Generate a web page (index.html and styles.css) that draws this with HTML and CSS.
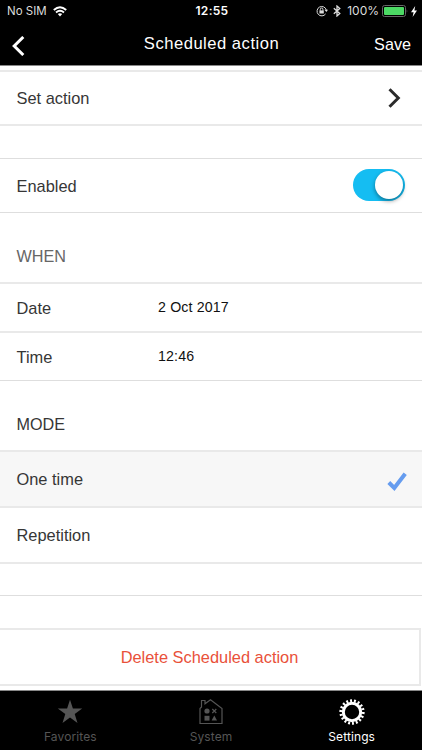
FILE: index.html
```html
<!DOCTYPE html>
<html lang="en">
<head>
    <meta charset="UTF-8">
    <meta name="viewport" content="width=device-width, initial-scale=1.0">
    <title>Scheduled action</title>
    <link rel="stylesheet" href="styles.css">
</head>
<body>

    <!-- Status bar and navigation -->
    <header class="header">
        <div class="status-bar">
            <div class="status-left">
                <span>No SIM</span>
                <svg class="wifi" width="14" height="11" viewBox="0 0 14 11" fill="none" stroke="#fff" stroke-width="1.9">
                    <path d="M0.8 4Q7 -1.6 13.2 4"/>
                    <path d="M3 6.5Q7 3 11 6.5"/>
                    <path d="M7 10.4L4.8 8.1Q7 6.4 9.2 8.1Z" fill="#fff" stroke="none"/>
                </svg>
            </div>
            <span class="clock">12:55</span>
            <div class="status-right">
                <svg width="12" height="12" viewBox="0 0 12 12" fill="none" stroke="#ddd">
                    <path d="M9.6 8.9A4.7 4.7 0 1 1 10.3 5"/>
                    <path d="M8.4 4.8H12L10.4 7Z" fill="#ddd" stroke="none"/>
                    <path d="M3.4 5.4H7.8V8.5H3.4Z" fill="#ddd" stroke="none"/>
                    <path d="M4.3 5.6V4.3A1.3 1.3 0 0 1 6.9 4.3V5.6"/>
                </svg>
                <svg class="bluetooth" width="8" height="12" viewBox="0 0 8 12" fill="none" stroke="#ddd" stroke-width="1.3">
                    <path d="M0.8 3.2L6.8 8.6L4 11V1L6.8 3.4L0.8 8.8"/>
                </svg>
                <span class="percent">100%</span>
                <svg class="battery" width="26" height="12" viewBox="0 0 26 12">
                    <rect x="0.5" y="0.5" width="23" height="11" rx="2" fill="none" stroke="#666"/>
                    <rect x="2" y="2" width="20" height="8" rx="1" fill="#4cd964"/>
                    <path d="M24.7 4.3Q26 6 24.7 7.7Z" fill="#666"/>
                </svg>
                <svg class="bolt" width="6" height="11" viewBox="0 0 6 11">
                    <path d="M4.2 0L0 6.2H2.6L1.6 11L6 4.6H3.4Z" fill="#fff"/>
                </svg>
            </div>
        </div>
        <nav class="nav">
            <svg class="back" width="13" height="20" viewBox="0 0 13 20" fill="none" stroke="#fff" stroke-width="3">
                <path d="M11.3 1L2.2 10L11.3 19"/>
            </svg>
            <h1>Scheduled action</h1>
            <span class="save">Save</span>
        </nav>
    </header>

    <main class="content">
        <div class="row row-action">
            <span>Set action</span>
            <svg class="chevron" width="13" height="20" viewBox="0 0 13 20" fill="none" stroke="#2b2b2b" stroke-width="3">
                <path d="M1.5 1.2L10.3 10L1.5 18.8"/>
            </svg>
        </div>

        <div class="row row-enabled">
            <span>Enabled</span>
            <div class="toggle"><div class="knob"></div></div>
        </div>

        <h2 class="when">WHEN</h2>
        <div class="row row-date">
            <span class="label">Date</span>
            <span class="value">2 Oct 2017</span>
        </div>
        <div class="row row-time">
            <span class="label">Time</span>
            <span class="value">12:46</span>
        </div>

        <h2 class="mode">MODE</h2>
        <div class="row row-mode selected">
            <span>One time</span>
            <svg class="check" width="20" height="20" viewBox="0 0 20 20" fill="none" stroke="#659cef" stroke-width="4">
                <path d="M1.8 10.5L7.3 16L18.2 1.8"/>
            </svg>
        </div>
        <div class="row row-mode">
            <span>Repetition</span>
        </div>
        <div class="spacer"></div>

        <button class="delete">Delete Scheduled action</button>
    </main>

    <!-- Bottom tabs -->
    <footer class="tabs">
        <div class="tab">
            <svg width="26" height="26" viewBox="0 0 26 26">
                <path d="M13 0.8L15.9 9.6H25.2L17.7 15L20.5 24L13 18.5L5.5 24L8.3 15L0.8 9.6H10.1Z" fill="#555"/>
            </svg>
            <span>Favorites</span>
        </div>
        <div class="tab">
            <svg width="26" height="26" viewBox="0 0 26 26" fill="none" stroke="#555" stroke-width="1.2">
                <path d="M2 24.5V9.5L3.5 8V1.5H7V4.8L12.5 0.8L24 9.5V24.5Z"/>
                <g fill="#555" stroke="none">
                    <circle cx="9" cy="12" r="2.6"/>
                    <path d="M6.5 16.8H11.5V21.6H6.5Z"/>
                    <path d="M16.3 16.6L19 21.6H13.6Z"/>
                </g>
                <path d="M14.3 10L18.3 14M18.3 10L14.3 14"/>
            </svg>
            <span>System</span>
        </div>
        <div class="tab active">
            <svg width="26" height="26" viewBox="0 0 26 26" fill="none" stroke="#fff">
                <circle cx="13" cy="13" r="8.7" stroke-width="3"/>
                <circle cx="13" cy="13" r="11.2" stroke-width="2.9" pathLength="180" stroke-dasharray="5 5"/>
            </svg>
            <span>Settings</span>
        </div>
    </footer>

</body>
</html>
```

FILE: styles.css
```css
* {
    box-sizing: border-box;
}
body {
    font-family: "Liberation Sans", Arial, sans-serif;
    font-size: 16.4px;
    line-height: 20px;
    margin: 0;
    height: 750px;
    display: flex;
    flex-direction: column;
    background-color: #fff;
    color: #363636;
    overflow: hidden;
}

.header {
    height: 66px;
    background-color: #000;
    color: #fff;
    border-bottom: 1px solid #888;
}
.status-bar {
    height: 22px;
    display: grid;
    grid-template-columns: 1fr auto 1fr;
    align-items: center;
    padding: 0 5px 0 7px;
    font-family: Inter, sans-serif;
    font-size: 11.5px;
    color: #ddd;
}
.status-left, .status-right {
    display: flex;
    align-items: center;
}
.status-right {
    justify-content: flex-end;
}
.wifi {
    margin-left: 6px;
}
.clock {
    font-weight: 600;
    font-size: 12px;
    letter-spacing: 0.3px;
    color: #fff;
}
.bluetooth {
    margin-left: 5px;
}
.percent {
    margin-left: 6px;
    font-size: 12px;
}
.battery {
    margin-left: 3px;
}
.bolt {
    margin-left: 3px;
}
.nav {
    height: 43px;
    display: grid;
    grid-template-columns: 1fr auto 1fr;
    align-items: center;
    padding: 0 11px 0 12px;
}
.back {
    margin-top: 5px;
}
.nav h1 {
    font-size: 16.6px;
    font-weight: normal;
    letter-spacing: 0.5px;
    margin: 0;
}
.save {
    text-align: right;
    font-size: 16.2px;
}

.content {
    flex: 1;
    padding-top: 4px;
}
.row {
    display: flex;
    align-items: center;
    justify-content: space-between;
    padding: 0 17px 0 16.5px;
    border: 0 solid #e9e9e9;
}
.row-action {
    height: 56px;
    border-width: 2px 0;
    margin-bottom: 32px;
}
.chevron {
    margin-right: 4px;
}
.row-enabled {
    height: 55px;
    border-width: 1px 0;
    border-color: #dedede;
}
.toggle {
    width: 52px;
    height: 32px;
    margin-bottom: 1px;
    padding: 2px;
    border-radius: 16px;
    background-color: #15bdf2;
    display: flex;
    justify-content: flex-end;
}
.knob {
    width: 28px;
    height: 28px;
    border-radius: 50%;
    background-color: #fff;
    box-shadow: 0 2px 4px rgba(0, 0, 0, 0.4);
}
.content h2 {
    height: 69px;
    margin: 0;
    padding: 33px 16.5px 0;
    font-size: 16.2px;
    font-weight: normal;
}
.when {
    color: #666;
}
.row-date, .row-time {
    justify-content: flex-start;
    border-top-width: 2px;
}
.row-date {
    height: 49px;
}
.row-time {
    height: 50px;
    border-bottom: 1px solid #dedede;
}
.label {
    width: 141.5px;
}
.value {
    padding-bottom: 2px;
    font-size: 14.2px;
    letter-spacing: 0.15px;
    color: #111;
}
.row-mode {
    height: 56px;
    border-top-width: 2px;
}
.selected {
    background-color: #f7f7f7;
}
.check {
    margin: 5px -2px 0 0;
}
.spacer {
    height: 34px;
    border-top: 2px solid #e9e9e9;
    border-bottom: 1px solid #dedede;
    margin-bottom: 32px;
}
.delete {
    display: block;
    width: 421px;
    height: 58px;
    padding: 0;
    border: solid #e9e9e9;
    border-width: 2px 2px 2px 0;
    background-color: #fff;
    color: #e9513a;
    font-family: inherit;
    font-size: 16.4px;
}

.tabs {
    height: 60px;
    display: grid;
    grid-template-columns: repeat(3, 1fr);
    padding-top: 8px;
    background-color: #000;
    border-top: 1px solid #888;
}
.tab {
    display: flex;
    flex-direction: column;
    align-items: center;
    color: #555;
    font-family: Inter, sans-serif;
    font-size: 12px;
    letter-spacing: 0.1px;
}
.tab span {
    padding-top: 2px;
}
.active {
    color: #fff;
}
```
